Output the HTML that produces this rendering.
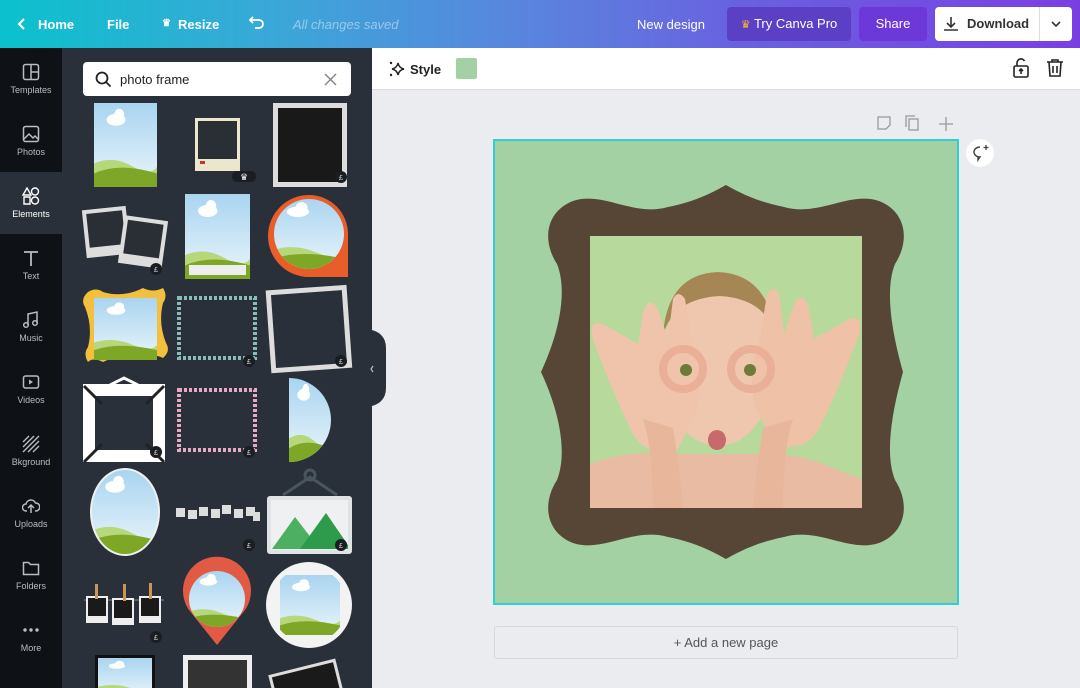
<!DOCTYPE html>
<html><head><meta charset="utf-8"><style>
*{margin:0;padding:0;box-sizing:border-box}
body{width:1080px;height:688px;overflow:hidden;font-family:"Liberation Sans",sans-serif;background:#ebecf0;position:relative}
.top{position:absolute;left:0;top:0;width:1080px;height:48px;background:linear-gradient(90deg,#0cc1cd 0%,#3aa8d8 25%,#5b82de 50%,#6a5fe0 70%,#7a3fe3 100%);color:#fff;font-size:13px;font-weight:bold}
.top span{position:absolute;top:17px}
.btn{position:absolute;top:7px;height:34px;border-radius:4px;color:#fff;font-size:13px;font-weight:bold;line-height:34px;text-align:center}
.side{position:absolute;left:0;top:48px;width:62px;height:640px;background:#0e1217}
.si{position:absolute;left:0;width:62px;height:62px;color:#b9bcc2;font-size:9px;text-align:center}
.si .lab{position:absolute;top:37px;width:62px}
.si svg{position:absolute;left:22px;top:15px}
.panel{position:absolute;left:62px;top:48px;width:310px;height:640px;background:#293039}
.search{position:absolute;left:83px;top:62px;width:268px;height:34px;background:#fff;border-radius:4px;font-size:13px;color:#222}
.bar2{position:absolute;left:372px;top:48px;width:708px;height:42px;background:#fff;border-bottom:1px solid #dcdde1}
.pound{fill:#1a1e23}
</style></head><body>
<div class="top">
<svg style="position:absolute;left:17px;top:17px" width="10" height="14" viewBox="0 0 10 14"><path d="M7 2L2 7l5 5" stroke="#fff" stroke-width="2" fill="none"/></svg>
<span style="left:38px">Home</span><span style="left:107px">File</span>
<span style="left:162px;font-size:10px;top:18px">♛</span><span style="left:178px">Resize</span>
<svg style="position:absolute;left:248px;top:15px" width="18" height="16" viewBox="0 0 18 16"><path d="M5 2L2 5l3 3M2 5h9a4 4 0 010 8H7" stroke="#fff" stroke-width="1.8" fill="none"/></svg>
<span style="left:293px;font-weight:normal;font-style:italic;color:rgba(255,255,255,.45)">All changes saved</span>
<span style="left:637px;font-weight:normal">New design</span>
<div class="btn" style="left:727px;width:124px;background:#5b3fc4;font-weight:normal"><span style="color:#f5c020;position:static;font-size:11px">♛</span> Try Canva Pro</div>
<div class="btn" style="left:859px;width:68px;background:#6c38d8;font-weight:normal">Share</div>
<div class="btn" style="left:935px;width:137px;background:#fff;color:#333;text-align:left">
<svg style="position:absolute;left:8px;top:9px" width="16" height="16" viewBox="0 0 16 16"><path d="M8 1v10M4 7l4 4 4-4M1 14h14" stroke="#333" stroke-width="1.6" fill="none"/></svg>
<span style="position:absolute;left:32px;top:0">Download</span>
<div style="position:absolute;left:104px;top:0;width:1px;height:34px;background:#ddd"></div>
<svg style="position:absolute;left:116px;top:13px" width="10" height="8" viewBox="0 0 10 8"><path d="M1 2l4 4 4-4" stroke="#333" stroke-width="1.6" fill="none"/></svg>
</div>
</div>
<div class="side">
<div class="si" style="top:0"><svg width="18" height="18" viewBox="0 0 18 18"><rect x="1.5" y="1.5" width="15" height="15" rx="2" stroke="#b9bcc2" stroke-width="1.5" fill="none"/><path d="M9 1.5v15M9 9h7.5" stroke="#b9bcc2" stroke-width="1.5"/></svg><div class="lab">Templates</div></div>
<div class="si" style="top:62px"><svg width="18" height="18" viewBox="0 0 18 18"><rect x="1.5" y="1.5" width="15" height="15" rx="2" stroke="#b9bcc2" stroke-width="1.5" fill="none"/><path d="M2 14l5-5 4 4 2-2 3 3" stroke="#b9bcc2" stroke-width="1.5" fill="none"/></svg><div class="lab">Photos</div></div>
<div class="si" style="top:124px;background:#293039;color:#fff"><svg width="18" height="18" viewBox="0 0 18 18"><path d="M5 1l4 7H1z M13 10a3.5 3.5 0 110 7 3.5 3.5 0 010-7z M2 10h6v7H2z M13 1a3.5 3.5 0 110 7 3.5 3.5 0 010-7z" stroke="#fff" stroke-width="1.4" fill="none"/></svg><div class="lab">Elements</div></div>
<div class="si" style="top:186px"><svg width="18" height="18" viewBox="0 0 18 18"><path d="M2 3h14M9 3v14" stroke="#b9bcc2" stroke-width="1.8"/></svg><div class="lab">Text</div></div>
<div class="si" style="top:248px"><svg width="18" height="18" viewBox="0 0 18 18"><path d="M6 14V3l9-2v11" stroke="#b9bcc2" stroke-width="1.5" fill="none"/><circle cx="4" cy="14" r="2.3" stroke="#b9bcc2" stroke-width="1.5" fill="none"/><circle cx="13" cy="12" r="2.3" stroke="#b9bcc2" stroke-width="1.5" fill="none"/></svg><div class="lab">Music</div></div>
<div class="si" style="top:310px"><svg width="18" height="18" viewBox="0 0 18 18"><rect x="1.5" y="3" width="15" height="12" rx="2" stroke="#b9bcc2" stroke-width="1.5" fill="none"/><path d="M7 6.5v5l4-2.5z" fill="#b9bcc2"/></svg><div class="lab">Videos</div></div>
<div class="si" style="top:372px"><svg width="18" height="18" viewBox="0 0 18 18"><path d="M1 7l6-6M1 12l11-11M1 17l16-16M6 17l11-11M11 17l6-6" stroke="#b9bcc2" stroke-width="1.4"/></svg><div class="lab">Bkground</div></div>
<div class="si" style="top:434px"><svg width="18" height="18" viewBox="0 0 18 18"><path d="M5 14H4a3.5 3.5 0 010-7 5 5 0 019.5-1A3.5 3.5 0 0114 14h-1M9 16V8M6 11l3-3 3 3" stroke="#b9bcc2" stroke-width="1.5" fill="none"/></svg><div class="lab">Uploads</div></div>
<div class="si" style="top:496px"><svg width="18" height="18" viewBox="0 0 18 18"><path d="M1.5 3.5h5l2 2h8v10h-15z" stroke="#b9bcc2" stroke-width="1.5" fill="none"/></svg><div class="lab">Folders</div></div>
<div class="si" style="top:558px"><svg width="18" height="18" viewBox="0 0 18 18"><circle cx="3" cy="9" r="1.7" fill="#b9bcc2"/><circle cx="9" cy="9" r="1.7" fill="#b9bcc2"/><circle cx="15" cy="9" r="1.7" fill="#b9bcc2"/></svg><div class="lab">More</div></div>
</div>
<div class="panel"></div>
<div class="search">
<svg style="position:absolute;left:12px;top:9px" width="17" height="17" viewBox="0 0 17 17"><circle cx="7" cy="7" r="5.5" stroke="#222" stroke-width="1.8" fill="none"/><path d="M11 11l4.5 4.5" stroke="#222" stroke-width="1.8"/></svg>
<span style="position:absolute;left:37px;top:10px">photo frame</span>
<svg style="position:absolute;left:241px;top:11px" width="13" height="13" viewBox="0 0 13 13"><path d="M1 1l11 11M12 1L1 12" stroke="#888" stroke-width="1.5"/></svg>
</div>
<svg style="position:absolute;left:0;top:0" width="1080" height="688" viewBox="0 0 1080 688">
<defs>
<linearGradient id="sk" x1="0" y1="0" x2="0" y2="1"><stop offset="0" stop-color="#a9d4f0"/><stop offset="1" stop-color="#eaf5fb"/></linearGradient>
<symbol id="sky" viewBox="0 0 100 100" preserveAspectRatio="none">
<rect width="100" height="100" fill="url(#sk)"/>
<ellipse cx="35" cy="20" rx="15" ry="7" fill="#fff"/><ellipse cx="40" cy="14" rx="8" ry="7" fill="#fff"/>
<path d="M0 72Q30 62 60 75T100 76V100H0z" fill="#b6d77a"/>
<path d="M0 84Q40 70 100 84V100H0z" fill="#7ea727"/>
</symbol>
<clipPath id="c1"><ellipse cx="125" cy="512" rx="33" ry="42"/></clipPath>
<clipPath id="c2"><circle cx="309" cy="234" r="35"/></clipPath>
<clipPath id="c3"><circle cx="217" cy="599" r="28"/></clipPath>
<clipPath id="c4"><path d="M289 378a42 42 0 010 84z"/></clipPath>
<clipPath id="c5"><circle cx="309" cy="605" r="38"/></clipPath>
</defs>
<!-- row1 -->
<use href="#sky" x="94" y="103" width="63" height="84"/>
<rect x="195" y="118" width="45" height="53" fill="#ece6cc"/><rect x="198" y="121" width="39" height="38" fill="#2a2f36"/><rect x="200" y="161" width="5" height="3" fill="#c33"/>
<rect x="232" y="171" width="24" height="11" rx="5" fill="#1a1e23"/><text x="244" y="180" font-size="9" fill="#fff" text-anchor="middle">♛</text>
<rect x="273" y="103" width="74" height="84" fill="#ddd"/><rect x="278" y="108" width="64" height="74" fill="#191919"/>
<!-- row2 -->
<g transform="rotate(-6 106 230)"><rect x="84" y="208" width="44" height="48" fill="#ddd"/><rect x="88" y="212" width="36" height="34" fill="#2a2f36"/></g>
<g transform="rotate(8 143 242)"><rect x="121" y="218" width="44" height="48" fill="#ddd"/><rect x="125" y="222" width="36" height="34" fill="#2a2f36"/></g>
<use href="#sky" x="185" y="194" width="65" height="85"/><rect x="189" y="265" width="57" height="10" fill="#eee"/>
<path d="M309 195a39 39 0 0139 39v43h-39a39 39 0 010-82z" fill="#e95d2a"/>
<g clip-path="url(#c2)"><use href="#sky" x="272" y="197" width="74" height="74"/></g>
<!-- row3 -->
<path d="M88 292q8-5 15 0q20 6 40-4q10 5 20 0q5 8 0 15q-5 20 3 40q5 8 -3 15q-10 -5 -20 0q-20 -6 -40 4q-10 -5 -15 0q-5 -8 0 -15q5 -20 -3 -40q-5 -8 3 -15z" fill="#f3bf3e"/>
<use href="#sky" x="94" y="298" width="63" height="62"/>
<rect x="179" y="298" width="76" height="60" fill="none" stroke="#8bbcb9" stroke-width="4" stroke-dasharray="3 2"/>
<g transform="rotate(-4 310 330)"><rect x="271" y="290" width="76" height="78" fill="none" stroke="#ddd" stroke-width="5"/></g>
<!-- row4 -->
<rect x="89" y="390" width="70" height="66" fill="none" stroke="#fff" stroke-width="12"/>
<path d="M84 386l18 18M164 386l-18 18M84 462l18-18M164 462l-18-18" stroke="#222" stroke-width="3"/>
<path d="M110 385l14-7 14 7" stroke="#fff" stroke-width="3" fill="none"/>
<rect x="179" y="390" width="76" height="60" fill="none" stroke="#e8a9c5" stroke-width="4" stroke-dasharray="3 2"/>
<g clip-path="url(#c4)"><use href="#sky" x="289" y="378" width="42" height="84"/></g>
<!-- row5 -->
<ellipse cx="125" cy="512" rx="35" ry="44" fill="#f0f0f0"/>
<g clip-path="url(#c1)"><use href="#sky" x="92" y="470" width="66" height="84"/></g>
<g fill="#ddd"><rect x="176" y="508" width="9" height="9"/><rect x="188" y="510" width="9" height="9"/><rect x="199" y="507" width="9" height="9"/><rect x="211" y="509" width="9" height="9"/><rect x="222" y="505" width="9" height="9"/><rect x="234" y="509" width="9" height="9"/><rect x="246" y="507" width="9" height="9"/><rect x="253" y="512" width="7" height="9"/></g>
<path d="M283 495l27-18 27 18" stroke="#4a5560" stroke-width="3" fill="none"/><circle cx="310" cy="475" r="5" fill="none" stroke="#4a5560" stroke-width="3"/>
<rect x="267" y="496" width="85" height="58" rx="3" fill="#dfe3e6"/><rect x="271" y="500" width="77" height="50" fill="#eef0f2"/>
<path d="M272 549l23-32 17 22 14-22 22 32z" fill="#4caf62"/><path d="M300 549l26-36 22 32v4z" fill="#2e9a4c"/>
<!-- row6 -->
<path d="M84 600h80" stroke="#888" stroke-width="1"/>
<g><rect x="86" y="596" width="22" height="27" fill="#eee"/><rect x="88" y="598" width="18" height="18" fill="#1a1a1a"/><rect x="95" y="584" width="3" height="15" fill="#c8965a"/></g>
<g><rect x="112" y="598" width="22" height="27" fill="#eee"/><rect x="114" y="600" width="18" height="18" fill="#1a1a1a"/><rect x="123" y="584" width="3" height="17" fill="#c8965a"/></g>
<g><rect x="139" y="596" width="22" height="27" fill="#eee"/><rect x="141" y="598" width="18" height="18" fill="#1a1a1a"/><rect x="149" y="583" width="3" height="16" fill="#c8965a"/></g>
<path d="M217 645l-28-35a34 34 0 1156 0z" fill="#e35a44"/>
<g clip-path="url(#c3)"><use href="#sky" x="188" y="570" width="58" height="58"/></g>
<circle cx="309" cy="605" r="43" fill="#f3f3f3"/><g clip-path="url(#c5)"><use href="#sky" x="280" y="575" width="60" height="60"/></g>
<!-- row7 -->
<rect x="95" y="655" width="60" height="40" fill="#111"/><use href="#sky" x="98" y="658" width="54" height="40"/>
<rect x="183" y="655" width="69" height="40" fill="#eee"/><rect x="188" y="660" width="59" height="35" fill="#333"/>
<g transform="rotate(-14 305 680)"><rect x="272" y="668" width="66" height="40" fill="#1a1a1a" stroke="#ddd" stroke-width="3"/></g>
<!-- pound badges -->
<g class="pound"><circle cx="341" cy="177" r="6"/><circle cx="156" cy="269" r="6"/><circle cx="249" cy="361" r="6"/><circle cx="341" cy="361" r="6"/><circle cx="156" cy="452" r="6"/><circle cx="249" cy="452" r="6"/><circle cx="249" cy="545" r="6"/><circle cx="341" cy="545" r="6"/><circle cx="156" cy="637" r="6"/></g>
<g font-size="7" fill="#ddd" text-anchor="middle"><text x="341" y="180">£</text><text x="156" y="272">£</text><text x="249" y="364">£</text><text x="341" y="364">£</text><text x="156" y="455">£</text><text x="249" y="455">£</text><text x="249" y="548">£</text><text x="341" y="548">£</text><text x="156" y="640">£</text></g>
<!-- collapse tab -->
<path d="M372 330q14 4 14 18v40q0 14-14 18z" fill="#293039"/>
<path d="M373 366l-2 3 2 3" stroke="#bbb" stroke-width="1.2" fill="none"/>
</svg>
<div class="bar2">
<svg style="position:absolute;left:16px;top:12px" width="18" height="18" viewBox="0 0 18 18"><path d="M10 3q1 5 6 6q-5 1-6 6q-1-5-6-6q5-1 6-6z" stroke="#222" stroke-width="1.5" fill="none"/><circle cx="3" cy="3" r="1.2" fill="#222"/><circle cx="3" cy="15" r="1.2" fill="#222"/></svg>
<span style="position:absolute;left:38px;top:14px;font-size:13px;font-weight:bold;color:#222">Style</span>
<div style="position:absolute;left:84px;top:10px;width:21px;height:21px;background:#a3d1a3;border-radius:2px"></div>
<svg style="position:absolute;left:640px;top:10px" width="18" height="20" viewBox="0 0 18 20"><rect x="2" y="8" width="14" height="11" rx="1.5" stroke="#222" stroke-width="1.6" fill="none"/><path d="M5 8V5a4 4 0 017.5-2M9 16v-5M7 13l2-2 2 2" stroke="#222" stroke-width="1.6" fill="none"/></svg>
<svg style="position:absolute;left:674px;top:10px" width="18" height="20" viewBox="0 0 18 20"><path d="M1 4h16M6 4V2h6v2M3 4l1 14h10l1-14M7 8v7M11 8v7" stroke="#222" stroke-width="1.6" fill="none"/></svg>
</div>
<svg style="position:absolute;left:876px;top:115px" width="80" height="18" viewBox="0 0 80 18">
<path d="M2 2h12v8l-4 4H2z" stroke="#999" stroke-width="1.3" fill="none"/>
<rect x="33" y="4" width="9" height="11" stroke="#999" stroke-width="1.3" fill="none"/><path d="M30 12V1h9" stroke="#999" stroke-width="1.3" fill="none"/>
<path d="M70 2v14M63 9h14" stroke="#999" stroke-width="1.3"/>
</svg>
<div style="position:absolute;left:966px;top:139px;width:28px;height:28px;border-radius:50%;background:#fff"></div>
<svg style="position:absolute;left:970px;top:143px" width="20" height="20" viewBox="0 0 20 20"><path d="M10 4a6 5 0 100 10l-2 3v-3" stroke="#444" stroke-width="1.4" fill="none"/><path d="M16 2v5M13.5 4.5h5" stroke="#444" stroke-width="1.3"/></svg>
<div style="position:absolute;left:493px;top:139px;width:466px;height:466px;background:#a3d1a3;border:2px solid #2ed0d6"></div>
<svg style="position:absolute;left:493px;top:139px" width="466" height="466" viewBox="0 0 466 466">
<defs><clipPath id="ph"><rect x="97" y="97" width="272" height="272"/></clipPath></defs>
<path d="M80 62C110 52 140 78 175 68C205 62 222 52 233 46C244 52 261 62 291 68C326 78 356 52 386 62C412 72 418 100 402 125C392 150 398 190 410 233C398 276 392 316 402 341C418 366 412 394 386 404C356 414 326 388 291 398C261 404 244 414 233 420C222 414 205 404 175 398C140 388 110 414 80 404C54 394 48 366 64 341C74 316 68 276 48 233C68 190 74 150 64 125C48 100 54 72 80 62Z" fill="#574636"/>
<rect x="97" y="97" width="272" height="272" fill="#b8d99c"/>
<g clip-path="url(#ph)">
<path d="M97 369V325q40-15 80-10l95 0q40 0 70 15l27 10v29z" fill="#e8bba2"/>
<ellipse cx="225" cy="225" rx="57" ry="82" fill="#efc6ae"/>
<path d="M170 195q5-60 55-62q50 2 57 62q-10-35-55-38q-45 2-57 38z" fill="#a78656"/>
<path d="M100 200q-5-20 10-15l35 20 5-30q5-20 15-5l10 30 5-40q5-10 12 0l8 50q10 25 5 60l-20 40q-30 10-45-15q-20-40-40-95z" fill="#f0c4aa"/>
<path d="M366 195q5-20-10-15l-35 20-5-30q-5-20-15-5l-10 30-5-40q-5-10-12 0l-8 50q-10 25-5 60l20 40q30 10 45-15q20-40 40-95z" fill="#efc1a6"/>
<path d="M150 280q10 30 10 89h30q-5-50-10-80z" fill="#e7b69b"/>
<path d="M300 280q-10 30-10 89h-30q5-50 10-80z" fill="#e7b69b"/>
<circle cx="193" cy="231" r="6" fill="#6d7a3a"/><circle cx="257" cy="231" r="6" fill="#6d7a3a"/>
<circle cx="190" cy="230" r="20" fill="none" stroke="#e9b097" stroke-width="8"/><circle cx="258" cy="230" r="20" fill="none" stroke="#e9b097" stroke-width="8"/>
<ellipse cx="224" cy="301" rx="9" ry="10" fill="#c8696b"/>
</g>
</svg>
<div style="position:absolute;left:494px;top:626px;width:464px;height:33px;border:1px solid #d6d8dc;border-radius:3px;background:#ebecf0;text-align:center;line-height:31px;font-size:13px;color:#555">+ Add a new page</div>
</body></html>
